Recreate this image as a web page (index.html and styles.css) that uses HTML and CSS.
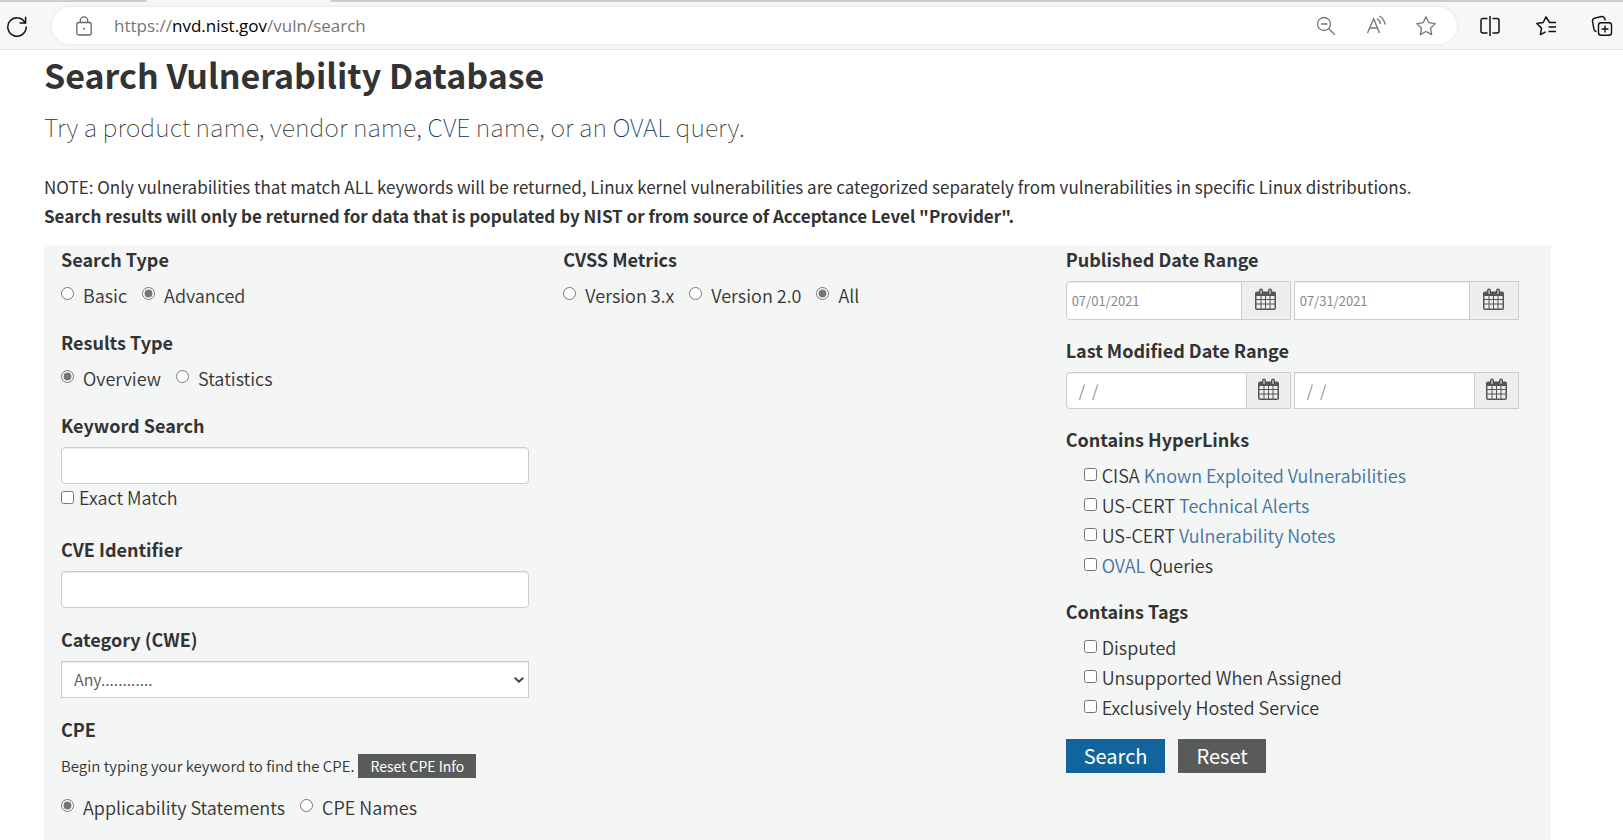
FILE: index.html
```html
<!DOCTYPE html>
<html lang="en">
<head>
<meta charset="utf-8">
<title>NVD - Search</title>
<link rel="stylesheet" href="styles.css">
</head>
<body>
<svg class="sprite" aria-hidden="true">
  <symbol id="calendar" viewBox="0 0 21 22">
    <path fill="#555" d="M0 5.500a2 2 0 0 1 2-2h2V2.500a2 2 0 0 1 4 0v1h5V2.500a2 2 0 0 1 4 0v1h2a2 2 0 0 1 2 2V20a2 2 0 0 1-2 2H2a2 2 0 0 1-2-2z"/>
    <path fill="#eee" d="M5.500 2h1v4h-1zM14.500 2h1v4h-1zM1.500 8H5.500v3H1.500zM6.500 8h3.500v3H6.500zM11 8h3.500v3H11zM15.500 8h4v3h-4zM1.500 12H5.500v3.500H1.500zM6.500 12h3.500v3.500H6.500zM11 12h3.500v3.500H11zM15.500 12h4v3.500h-4zM1.500 16.500H5.500v4H1.500zM6.500 16.500h3.500v4H6.500zM11 16.500h3.500v4H11zM15.500 16.500h4v4h-4z"/>
  </symbol>
</svg>
<header class="browser">
  <div class="tabs"><span class="tab-left"></span><span class="tab-active"></span><span class="tab-right"></span></div>
  <div class="toolbar">
    <button class="tool" type="button" aria-label="Refresh">
      <svg width="22" height="22" viewBox="0 0 22 22" fill="none" stroke="#111" stroke-width="1.500"><path d="M19.300 8A9.200 9.200 0 1 0 20.200 11.500M19.600 1.800v6.200h-6"/></svg>
    </button>
    <div class="address">
      <svg width="16" height="20" viewBox="0 0 16 20" fill="none" stroke="#666" stroke-width="1.300"><rect x=".8" y="6.500" width="14.400" height="12.500" rx="2"/><path d="M4.300 6.500V4.500a3.700 3.700 0 0 1 7.400 0v2"/><circle cx="8" cy="12.700" r="1" fill="#666" stroke="none"/></svg>
      <span class="url">https://<span class="host">nvd.nist.gov</span>/vuln/search</span>
      <button class="tool" type="button" aria-label="Zoom out">
        <svg width="22" height="22" viewBox="0 0 22 22" fill="none" stroke="#777" stroke-width="1.300"><circle cx="9" cy="9" r="6.500"/><path d="M13.800 13.800l6 6M6 9h6.500"/></svg>
      </button>
      <button class="tool" type="button" aria-label="Read aloud">
        <svg width="22" height="22" viewBox="0 0 22 22" fill="none" stroke="#777" stroke-width="1.400"><path d="M2.500 18L8.700 3.700 14.500 18M4.800 13h7.600M12 3.500q3 2 3.400 5.500M14.300 1q5.200 3 5.700 8.500"/></svg>
      </button>
      <button class="tool" type="button" aria-label="Add to favourites">
        <svg width="22" height="22" viewBox="0 0 22 22" fill="none" stroke="#777" stroke-width="1.300" stroke-linejoin="round"><path d="M11 1.800l2.800 5.900 6.400.9-4.700 4.600 1.200 6.400L11 16.500l-5.700 3.100 1.200-6.400L1.800 8.600l6.400-.9z"/></svg>
      </button>
    </div>
    <button class="tool" type="button" aria-label="Split screen">
      <svg width="22" height="22" viewBox="0 0 22 22" fill="none" stroke="#111" stroke-width="1.500"><path d="M8.500 3.500H4a2 2 0 0 0-2 2v10.500a2 2 0 0 0 2 2h4.500M13.500 3.500H18a2 2 0 0 1 2 2v10.500a2 2 0 0 1-2 2h-4.500M11 1v20"/></svg>
    </button>
    <button class="tool" type="button" aria-label="Favourites">
      <svg width="22" height="22" viewBox="0 0 22 22" fill="none" stroke="#111" stroke-width="1.500" stroke-linejoin="round"><path d="M21 7.500h-6.500L11 1.800 8.200 7.500l-6.400 1 4.700 4.600-1.100 6.500 5.200-2.800M13.500 12H21M13.500 16.500H21"/></svg>
    </button>
    <button class="tool" type="button" aria-label="Collections">
      <svg width="22" height="22" viewBox="0 0 22 22" fill="none" stroke="#111" stroke-width="1.400"><rect x="7.500" y="7.800" width="13" height="12.500" rx="2.500"/><path d="M14 10.500v7M10.500 14h7M5.500 16.500a3 3 0 0 1-2.500-2L1.500 6.500a3 3 0 0 1 2-3.300L10.500 1.500a3 3 0 0 1 3.300 2.200l.5 1.800"/></svg>
    </button>
  </div>
</header>
<main class="page">
  <h1 class="title">Search Vulnerability Database</h1>
  <p class="lead">Try a product name, vendor name, <a class="lead-link" href="#cve">CVE</a> name, or an <a class="lead-link" href="#oval">OVAL</a> query.</p>
  <p class="note">NOTE: Only vulnerabilities that match ALL keywords will be returned, Linux kernel vulnerabilities are categorized separately from vulnerabilities in specific Linux distributions.<br><strong>Search results will only be returned for data that is populated by NIST or from source of Acceptance Level "Provider".</strong></p>
  <form class="panel">
    <div class="column">
      <div class="group" role="radiogroup" aria-labelledby="search-type">
        <span class="label" id="search-type">Search Type</span>
        <div class="choices">
          <label class="choice"><input class="mark" type="radio" name="type">Basic</label>
          <label class="choice"><input class="mark" type="radio" name="type" checked>Advanced</label>
        </div>
      </div>
      <div class="group" role="radiogroup" aria-labelledby="results-type">
        <span class="label" id="results-type">Results Type</span>
        <div class="choices">
          <label class="choice"><input class="mark" type="radio" name="results" checked>Overview</label>
          <label class="choice"><input class="mark" type="radio" name="results">Statistics</label>
        </div>
      </div>
      <div class="group keyword">
        <label class="label" for="keyword">Keyword Search</label>
        <input class="field" id="keyword" type="text">
        <label class="check"><input class="mark" type="checkbox">Exact Match</label>
      </div>
      <div class="group">
        <label class="label" for="cve">CVE Identifier</label>
        <input class="field" id="cve" type="text">
      </div>
      <div class="group">
        <label class="label" for="cwe">Category (CWE)</label>
        <div class="select-wrap">
          <select class="field select" id="cwe"><option>Any............</option></select>
          <svg class="caret" width="10" height="6" viewBox="0 0 10 6" fill="none" stroke="#444" stroke-width="2"><path d="M.8.800L5 4.700 9.200.800"/></svg>
        </div>
      </div>
      <div class="group" role="radiogroup" aria-labelledby="cpe">
        <span class="label" id="cpe">CPE</span>
        <div class="hint">Begin typing your keyword to find the CPE. <button class="btn small" type="button">Reset CPE Info</button></div>
        <div class="choices">
          <label class="choice"><input class="mark" type="radio" name="cpe" checked>Applicability Statements</label>
          <label class="choice"><input class="mark" type="radio" name="cpe">CPE Names</label>
        </div>
      </div>
    </div>
    <div class="column">
      <div class="group" role="radiogroup" aria-labelledby="cvss">
        <span class="label" id="cvss">CVSS Metrics</span>
        <div class="choices">
          <label class="choice"><input class="mark" type="radio" name="cvss">Version 3.x</label>
          <label class="choice"><input class="mark" type="radio" name="cvss">Version 2.0</label>
          <label class="choice"><input class="mark" type="radio" name="cvss" checked>All</label>
        </div>
      </div>
    </div>
    <div class="column">
      <div class="group" role="group" aria-labelledby="published">
        <span class="label" id="published">Published Date Range</span>
        <div class="dates published">
          <div class="date"><input class="date-input" type="text" placeholder="07/01/2021" aria-label="Published from"><button class="addon" type="button" aria-label="Pick start date"><svg width="21" height="22"><use href="#calendar"/></svg></button></div>
          <div class="date"><input class="date-input" type="text" placeholder="07/31/2021" aria-label="Published to"><button class="addon" type="button" aria-label="Pick end date"><svg width="21" height="22"><use href="#calendar"/></svg></button></div>
        </div>
      </div>
      <div class="group" role="group" aria-labelledby="modified">
        <span class="label" id="modified">Last Modified Date Range</span>
        <div class="dates modified">
          <div class="date"><input class="date-input" type="text" placeholder="/  /" aria-label="Modified from"><button class="addon" type="button" aria-label="Pick start date"><svg width="21" height="22"><use href="#calendar"/></svg></button></div>
          <div class="date"><input class="date-input" type="text" placeholder="/  /" aria-label="Modified to"><button class="addon" type="button" aria-label="Pick end date"><svg width="21" height="22"><use href="#calendar"/></svg></button></div>
        </div>
      </div>
      <div class="group" role="group" aria-labelledby="links">
        <span class="label" id="links">Contains HyperLinks</span>
        <div class="checks">
          <label class="check"><input class="mark" type="checkbox"><span>CISA <a class="link" href="#kev">Known Exploited Vulnerabilities</a></span></label>
          <label class="check"><input class="mark" type="checkbox"><span>US-CERT <a class="link" href="#alerts">Technical Alerts</a></span></label>
          <label class="check"><input class="mark" type="checkbox"><span>US-CERT <a class="link" href="#notes">Vulnerability Notes</a></span></label>
          <label class="check"><input class="mark" type="checkbox"><span><a class="link" href="#oval">OVAL</a> Queries</span></label>
        </div>
      </div>
      <div class="group" role="group" aria-labelledby="tags">
        <span class="label" id="tags">Contains Tags</span>
        <div class="checks">
          <label class="check"><input class="mark" type="checkbox">Disputed</label>
          <label class="check"><input class="mark" type="checkbox">Unsupported When Assigned</label>
          <label class="check"><input class="mark" type="checkbox">Exclusively Hosted Service</label>
        </div>
      </div>
      <div class="actions">
        <button class="btn primary" type="submit">Search</button>
        <button class="btn" type="reset">Reset</button>
      </div>
    </div>
  </form>
</main>
</body>
</html>
```
FILE: styles.css
```css
* { box-sizing: border-box; }
html { overflow: hidden; }
body {
  margin: 0;
  background: #fff;
  color: #333;
  font: 350 18px/29px "Source Sans Pro", "Noto Sans CJK SC", sans-serif;
}
button, input, select { font: inherit; color: inherit; margin: 0; }
a { text-decoration: none; }
.sprite { position: absolute; width: 0; height: 0; }

/* Browser chrome */
.browser { background: #f7f7f7; border-bottom: 1px solid #e5e5e5; }
.tabs { display: flex; height: 2px; }
.tab-left { width: 147px; background: #cdcdcd; border-bottom-right-radius: 4px 2px; }
.tab-active { width: 183px; }
.tab-right { flex: 1; background: #cdcdcd; border-bottom-left-radius: 4px 2px; }
.toolbar { display: flex; align-items: center; gap: 34px; height: 47px; padding: 0 10px 0 6px; }
.toolbar > .tool:first-child { margin-right: -10px; }
.tool { display: flex; flex: none; padding: 0; border: 0; background: none; }
.address {
  flex: 1;
  display: flex;
  align-items: center;
  gap: 28px;
  height: 37px;
  padding: 0 20px 0 24px;
  border-radius: 19px;
  background: #fff;
  box-shadow: 0 0 4px rgba(0, 0, 0, .08);
}
.toolbar > .address { margin-right: -12px; }
.url { flex: 1; margin-left: -6px; color: #767676; font: 400 17px/24px "Segoe UI", "Open Sans", sans-serif; }
.host { color: #000; }

/* Page heading */
.page { padding: 5px 72px 0 44px; }
.title { margin: 0; font-size: 34px; line-height: 40px; font-weight: 700; }
.lead { margin: 13px 0 0; font-size: 25px; line-height: 36px; font-weight: 100; }
.lead-link { color: #036; }
.note { margin: 28px 0 15px; font-size: 17px; font-weight: 400; }
.note strong { font-weight: 700; }

/* Search form */
.panel { display: grid; grid-template-columns: repeat(3, 1fr); min-height: 620px; background: #f3f6f5; }
.column { padding: 0 17px; }
.group { display: flex; flex-direction: column; align-items: flex-start; gap: 7px; margin-bottom: 17px; }
.label { font-weight: 700; }
.choices { display: flex; gap: 15px; padding-bottom: 1px; }
.choice { display: flex; gap: 9px; }
.mark { flex: none; width: 13px; height: 13px; accent-color: #767676; }
.choice .mark { margin-top: 6px; }
.check { display: flex; gap: 5px; }
.check .mark { margin-top: 8px; }
.keyword .check { margin-top: -8px; }
.keyword { margin-bottom: 23px; }
.field {
  width: 100%;
  height: 37px;
  padding: 0 12px;
  border: 1px solid #ccc;
  border-radius: 4px;
  background: #fff;
  box-shadow: inset 0 1px 1px rgba(0, 0, 0, .075);
}
.select-wrap { display: grid; align-items: center; width: 100%; }
.select-wrap > * { grid-area: 1 / 1; }
.select { appearance: none; border-radius: 0; color: #555; font-size: 16px; }
.caret { justify-self: end; margin-right: 5px; pointer-events: none; }
.hint { display: flex; align-items: center; gap: 4px; margin: 3px 0 8px; font-size: 15px; line-height: 24px; }
.checks { padding-left: 18px; margin-top: -1px; }
.checks .check { line-height: 30px; }
.link { color: #46739e; }

.dates { display: flex; gap: 3px; width: 453px; max-width: 100%; margin-bottom: -1px; }
.date { display: flex; flex: 1; min-width: 0; height: 37px; border: 1px solid #ccc; background: #fff; box-shadow: inset 0 1px 1px rgba(0, 0, 0, .075); }
.date:first-child { border-radius: 4px 0 0 4px; }
.date-input { flex: 1; min-width: 0; padding: 0 12px; border: 0; background: none; font-size: 16px; white-space: pre; }
.date-input::placeholder { color: #888; opacity: 1; }
.addon { display: flex; flex: none; align-items: center; justify-content: center; width: 44px; padding: 0 0 3px; border: 0; border-left: 1px solid #ccc; background: #eee; }
.published .date { height: 39px; }
.published .date-input { padding: 0 5px; font-size: 13px; font-weight: 400; }
.published .addon { width: 49px; }

.btn { height: 34px; padding: 0 18px; border: 0; background: #595b5a; color: #fff; font-size: 20px; font-weight: 400; line-height: 32px; }
.primary { background: #12659c; }
.small { height: 24px; padding: 0 12px; font-size: 14px; line-height: 22px; }
.actions { display: flex; gap: 13px; }
```
